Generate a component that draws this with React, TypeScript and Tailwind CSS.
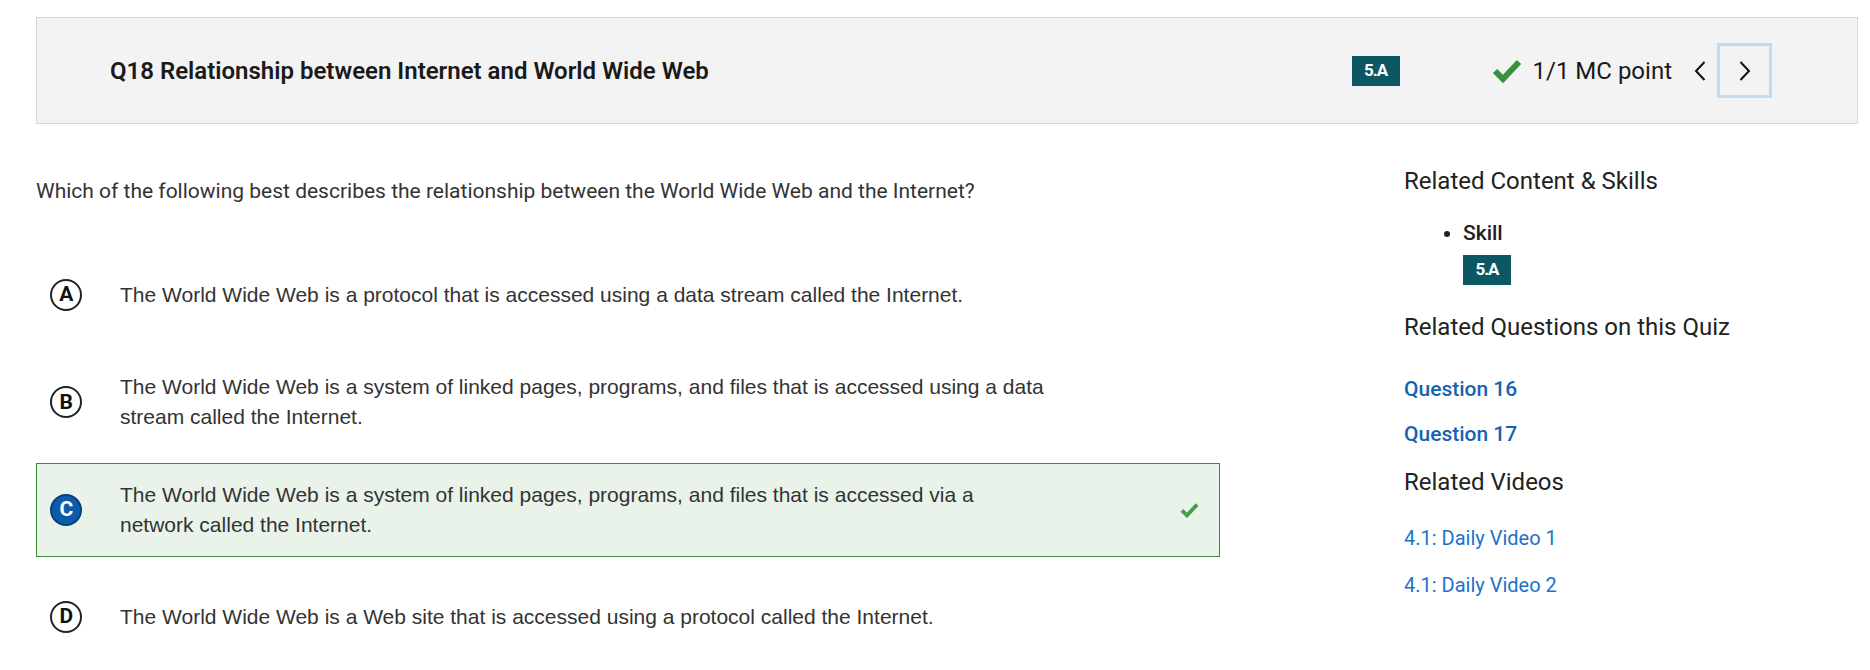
import React from 'react'

type Option = {
  letter: string
  text: string
  correct?: boolean
}

const OPTIONS: Option[] = [
  { letter: 'A', text: 'The World Wide Web is a protocol that is accessed using a data stream called the Internet.' },
  { letter: 'B', text: 'The World Wide Web is a system of linked pages, programs, and files that is accessed using a data stream called the Internet.' },
  { letter: 'C', text: 'The World Wide Web is a system of linked pages, programs, and files that is accessed via a network called the Internet.', correct: true },
  { letter: 'D', text: 'The World Wide Web is a Web site that is accessed using a protocol called the Internet.' },
]

function Check({ className }: { className?: string }): React.ReactElement {
  return (
    <svg viewBox="0 0 30 25" className={className} fill="none">
      <path d="M3 13 L11 21 L27 4" stroke="currentColor" strokeWidth="6" strokeLinejoin="miter" />
    </svg>
  )
}

function Badge(): React.ReactElement {
  return (
    <span className="inline-flex items-center justify-center w-[48px] h-[30px] bg-[#0b5763] text-white text-[17px] font-bold tracking-[-1px]">
      5.A
    </span>
  )
}

export default function App(): React.ReactElement {
  return (
    <div className="w-[1870px] h-[670px] bg-white pl-[36px] pr-[12px] pt-[17px] font-['Roboto',sans-serif] text-[#222]">
      {/* header */}
      <div className="h-[107px] flex items-center bg-[#f3f3f3] border border-[#d6d6d6] pl-[73px] pr-[85px]">
        <h1 className="flex-1 text-[24px] font-semibold text-[#1a1a1a]">Q18 Relationship between Internet and World Wide Web</h1>
        <Badge />
        <Check className="w-[30px] h-[25px] ml-[92px] text-[#3b8f40]" />
        <span className="ml-[11px] text-[24px] text-[#1a1a1a]">1/1 MC point</span>
        <button className="ml-[16px] w-[24px] h-[30px] flex items-center justify-center text-[#111]">
          <svg viewBox="0 0 12 20" className="w-[12px] h-[20px]" fill="none">
            <path d="M10.5 1 L2 10 L10.5 19" stroke="currentColor" strokeWidth="2" />
          </svg>
        </button>
        <button className="ml-[5px] w-[55px] h-[55px] border-[3px] border-[#c3dbee] flex items-center justify-center text-[#111]">
          <svg viewBox="0 0 12 20" className="w-[12px] h-[20px]" fill="none">
            <path d="M1.5 1 L10 10 L1.5 19" stroke="currentColor" strokeWidth="2" />
          </svg>
        </button>
      </div>

      <div className="flex">
        {/* question */}
        <div className="w-[1184px]">
          <p className="mt-[55px] text-[21px] leading-[24px] text-[#333]">
            Which of the following best describes the relationship between the World Wide Web and the Internet?
          </p>
          <div className="mt-[45px] flex flex-col gap-[13.3px]">
            {OPTIONS.map(o => (
              <div
                key={o.letter}
                className={`h-[94px] flex items-center border pl-[13px] pr-[20px] ${o.correct ? 'bg-[#e9f3ea] border-[#3d8b3d]' : 'border-transparent'}`}
              >
                <span
                  className={`w-[32px] h-[32px] shrink-0 rounded-full flex items-center justify-center text-[21px] font-bold tracking-[-0.5px] border-[2px] ${o.correct ? 'bg-[#0b5cab] border-[#0a3f78] text-white' : 'bg-white border-[#222] text-[#111]'}`}
                >
                  {o.letter}
                </span>
                <span className="ml-[38px] w-[926px] font-['Liberation_Sans',Arial,sans-serif] text-[21px] leading-[30px] text-[#333]">{o.text}</span>
                {o.correct && <Check className="ml-auto w-[19px] h-[16px] text-[#4a9e4a]" />}
              </div>
            ))}
          </div>
        </div>

        {/* sidebar */}
        <div className="ml-[184px] flex flex-col items-start">
          <h3 className="mt-[43px] text-[24px] leading-[28px] text-[#222]">Related Content &amp; Skills</h3>
          <ul className="mt-[26px] ml-[41px] list-disc pl-[18px]">
            <li className="text-[21px] leading-[24px] font-medium text-[#222]">Skill</li>
          </ul>
          <div className="mt-[10px] ml-[59px]">
            <Badge />
          </div>
          <h3 className="mt-[28px] text-[24px] leading-[28px] text-[#222]">Related Questions on this Quiz</h3>
          <a className="mt-[36px] text-[21px] leading-[24px] font-medium text-[#1662b3]">Question 16</a>
          <a className="mt-[21px] text-[21px] leading-[24px] font-medium text-[#1662b3]">Question 17</a>
          <h3 className="mt-[22px] text-[24px] leading-[28px] text-[#222]">Related Videos</h3>
          <a className="mt-[30px] text-[20px] leading-[24px] text-[#1b72cc]">4.1: Daily Video 1</a>
          <a className="mt-[23px] text-[20px] leading-[24px] text-[#1b72cc]">4.1: Daily Video 2</a>
        </div>
      </div>
    </div>
  )
}
